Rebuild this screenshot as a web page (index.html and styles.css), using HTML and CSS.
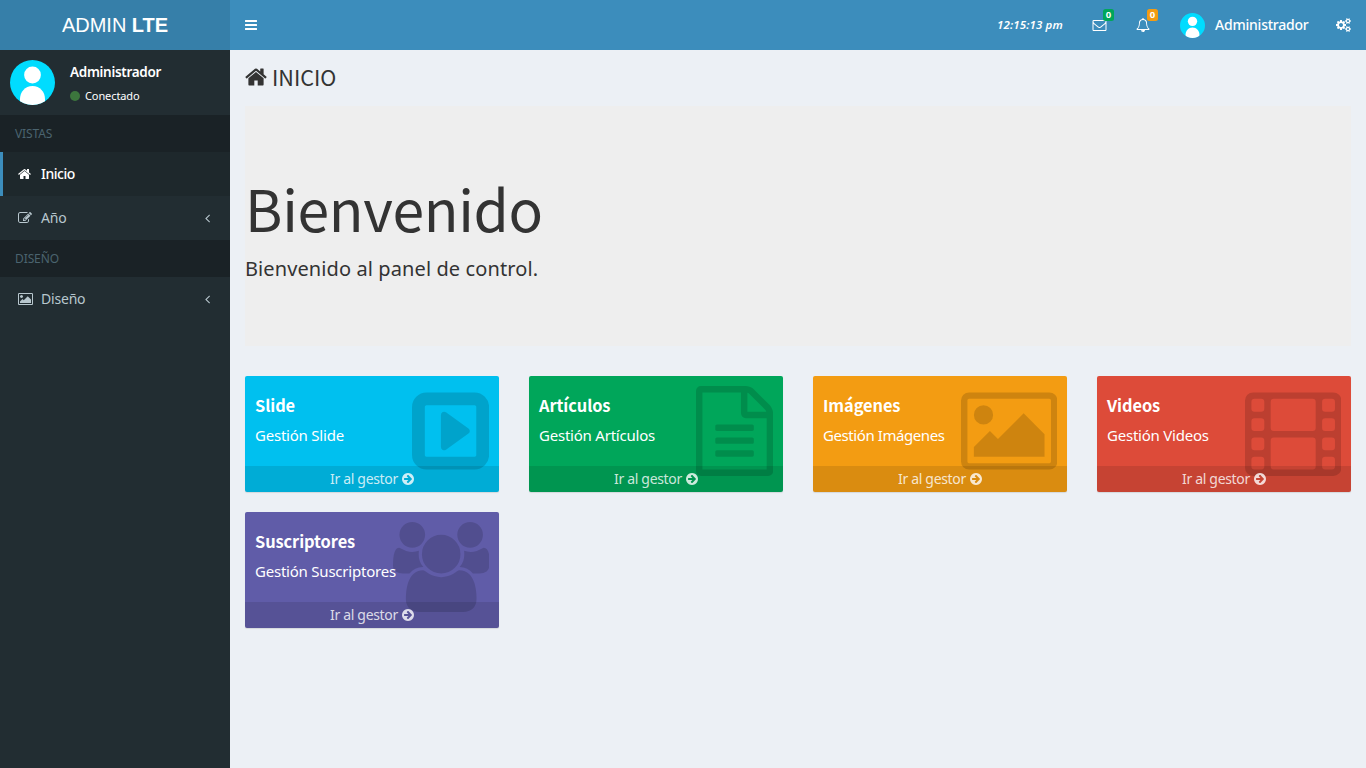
FILE: index.html
```html
<!DOCTYPE html>
<html lang="es">
<head>
<meta charset="utf-8">
<title>Admin LTE</title>
<link rel="stylesheet" href="styles.css">
</head>
<body>
<svg class="defs" aria-hidden="true">
<symbol id="home" viewBox="64 0 1664 1792"><path d="M1472 992v480q0 26-19 45t-45 19h-384v-384h-256v384h-384q-26 0-45-19t-19-45v-480q0-1 .5-3t.5-3l575-474 575 474q1 2 1 6zm223-69l-62 74q-8 9-21 11h-3q-13 0-21-7l-692-577-692 577q-12 8-24 7-13-2-21-11l-62-74q-8-10-7-23.500t11-21.500l719-599q32-26 76-26t76 26l244 204v-195q0-14 9-23t23-9h192q14 0 23 9t9 23v408l219 182q10 8 11 21.500t-7 23.500z"/></symbol>
<symbol id="edit" viewBox="0 0 1792 1792"><path d="M888 1184l116-116-152-152-116 116v56h96v96h56zm440-720q-16-16-33 1l-350 350q-17 17-1 33t33-1l350-350q17-17 1-33zm80 594v190q0 119-84.500 203.500t-203.500 84.500h-832q-119 0-203.500-84.500t-84.500-203.500v-832q0-119 84.500-203.500t203.500-84.500h832q63 0 117 25 15 7 18 23 3 17-9 29l-49 49q-14 14-32 8-23-6-45-6h-832q-66 0-113 47t-47 113v832q0 66 47 113t113 47h832q66 0 113-47t47-113v-126q0-13 9-22l64-64q15-15 35-7t20 29zm-96-738l288 288-672 672h-288v-288zm444 132l-92 92-288-288 92-92q28-28 68-28t68 28l152 152q28 28 28 68t-28 68z"/></symbol>
<symbol id="angle" viewBox="576 0 640 1792"><path d="M1203 544q0 13-10 23l-393 393 393 393q10 10 10 23t-10 23l-50 50q-10 10-23 10t-23-10l-466-466q-10-10-10-23t10-23l466-466q10-10 23-10t23 10l50 50q10 10 10 23z"/></symbol>
<symbol id="go" viewBox="128 0 1536 1792"><path d="M1413 896q0-27-18-45l-91-91-362-362q-18-18-45-18t-45 18l-91 91q-18 18-18 45t18 45l189 189h-502q-26 0-45 19t-19 45v128q0 26 19 45t45 19h502l-189 189q-19 19-19 45t19 45l91 91q18 18 45 18t45-18l362-362 91-91q18-18 18-45zm251 0q0 209-103 385.500t-279.500 279.500-385.500 103-385.500-103-279.500-279.500-103-385.500 103-385.500 279.500-279.500 385.500-103 385.500 103 279.500 279.500 103 385.500z"/></symbol>
<symbol id="bars" viewBox="128 0 1536 1792"><path d="M192 1280h1408q64 0 64 64v128q0 64-64 64h-1408q-64 0-64-64v-128q0-64 64-64zM192 768h1408q64 0 64 64v128q0 64-64 64h-1408q-64 0-64-64v-128q0-64 64-64zM192 256h1408q64 0 64 64v128q0 64-64 64h-1408q-64 0-64-64v-128q0-64 64-64z"/></symbol>
<symbol id="mail" viewBox="0 0 1792 1792"><path d="M1664 1504v-768q-32 36-69 66-268 206-426 338-51 43-83 67t-86.500 48.500-102.500 24.500h-2q-48 0-102.500-24.500t-86.500-48.500-83-67q-158-132-426-338-37-30-69-66v768q0 13 9.500 22.500t22.500 9.500h1472q13 0 22.500-9.500t9.500-22.500zm0-1051v-24.500l-.5-13-3-12.500-5.500-9-9-7.500-14-2.500h-1472q-13 0-22.500 9.500t-9.500 22.500q0 168 147 284 193 152 401 317 6 5 35 29.500t46 37.500 44.500 31.500 50.500 27.500 43 9h2q20 0 43-9t50.500-27.500 44.500-31.500 46-37.500 35-29.500q208-165 401-317 54-43 100.500-115.500t46.500-131.500zm128-37v1088q0 66-47 113t-113 47h-1472q-66 0-113-47t-47-113v-1088q0-66 47-113t113-47h1472q66 0 113 47t47 113z"/></symbol>
<symbol id="bell" viewBox="0 0 1792 1792"><path d="M912 1696q0-16-16-16-59 0-101.500-42.500t-42.500-101.500q0-16-16-16t-16 16q0 73 51.500 124.500t124.500 51.500q16 0 16-16zm-666-288h1300q-266-300-266-832 0-51-24-105t-69-103-121.500-80.500-169.500-31.500-169.500 31.500-121.500 80.500-69 103-24 105q0 532-266 832zm1482 0q0 52-38 90t-90 38h-448q0 106-75 181t-181 75-181-75-75-181h-448q-52 0-90-38t-38-90q50-42 91-88t85-119.500 74.500-158.500 50-206 19.500-260q0-152 117-282.500t307-158.500q-8-19-8-39 0-40 28-68t68-28 68 28 28 68q0 20-8 39 190 28 307 158.500t117 282.500q0 139 19.500 260t50 206 74.500 158.500 85 119.500 91 88z"/></symbol>
<symbol id="cogs" viewBox="-64 0 1920 1792"><path d="M832 896q0-106-75-181t-181-75-181 75-75 181 75 181 181 75 181-75 75-181zm768 512q0-52-38-90t-90-38-90 38-38 90q0 53 37.500 90.500t90.500 37.500 90.500-37.500 37.500-90.500zm0-1024q0-52-38-90t-90-38-90 38-38 90q0 53 37.500 90.500t90.500 37.500 90.500-37.500 37.500-90.500zm-384 421v185q0 10-7 19.500t-16 10.500l-155 24q-11 35-32 76 34 48 90 115 7 11 7 20 0 12-7 19-23 30-82.500 89.500t-78.500 59.500q-11 0-21-7l-115-90q-37 19-77 31-11 108-23 155-7 24-30 24h-186q-11 0-20-7.500t-10-17.500l-23-153q-34-10-75-31l-118 89q-7 7-20 7-11 0-21-8-144-133-144-160 0-9 7-19 10-14 41-53t47-61q-23-44-35-82l-152-24q-10-1-17-9.500t-7-19.500v-185q0-10 7-19.500t16-10.500l155-24q11-35 32-76-34-48-90-115-7-11-7-20 0-12 7-20 22-30 82-89t79-59q11 0 21 7l115 90q34-18 77-32 11-108 23-154 7-24 30-24h186q11 0 20 7.500t10 17.500l23 153q34 10 75 31l118-89q8-7 20-7 11 0 21 8 144 133 144 160 0 8-7 19-12 16-42 54t-45 60q23 48 34 82l152 23q10 2 17 10.500t7 19.500zm640 533v140q0 16-149 31-12 27-30 52 51 113 51 138 0 4-4 7-122 71-124 71-8 0-46-47t-52-68q-20 2-30 2t-30-2q-14 21-52 68t-46 47q-2 0-124-71-4-3-4-7 0-25 51-138-18-25-30-52-149-15-149-31v-140q0-16 149-31 13-29 30-52-51-113-51-138 0-4 4-7 4-2 35-20t59-34 30-16q8 0 46 46.500t52 67.500q20-2 30-2t30 2q51-71 92-112l6-2q4 0 124 70 4 3 4 7 0 25-51 138 17 23 30 52 149 15 149 31zm0-1024v140q0 16-149 31-12 27-30 52 51 113 51 138 0 4-4 7-122 71-124 71-8 0-46-47t-52-68q-20 2-30 2t-30-2q-14 21-52 68t-46 47q-2 0-124-71-4-3-4-7 0-25 51-138-18-25-30-52-149-15-149-31v-140q0-16 149-31 13-29 30-52-51-113-51-138 0-4 4-7 4-2 35-20t59-34 30-16q8 0 46 46.500t52 67.500q20-2 30-2t30 2q51-71 92-112l6-2q4 0 124 70 4 3 4 7 0 25-51 138 17 23 30 52 149 15 149 31z"/></symbol>
<symbol id="play" viewBox="128 0 1536 1792"><path d="M1280 896q0 33-27 52l-448 320q-17 12-37 12-15 0-29-7-35-17-35-57v-640q0-40 35-57 36-18 66 5l448 320q27 19 27 52zm128 480v-960q0-14-9-23t-23-9h-960q-14 0-23 9t-9 23v960q0 14 9 23t23 9h960q14 0 23-9t9-23zm256-960v960q0 119-84.500 203.500t-203.500 84.500h-960q-119 0-203.500-84.500t-84.500-203.500v-960q0-119 84.500-203.500t203.500-84.500h960q119 0 203.500 84.500t84.500 203.500z"/></symbol>
<symbol id="file" viewBox="128 0 1536 1792"><path d="M1596 380q28 28 48 76t20 88v1152q0 40-28 68t-68 28h-1344q-40 0-68-28t-28-68v-1600q0-40 28-68t68-28h896q40 0 88 20t76 48zm-444-244v376h376q-10-29-22-41l-313-313q-12-12-41-22zm384 1528v-1024h-416q-40 0-68-28t-28-68v-416h-768v1536h1280zm-1024-864q0-14 9-23t23-9h704q14 0 23 9t9 23v64q0 14-9 23t-23 9h-704q-14 0-23-9t-9-23v-64zm736 224q14 0 23 9t9 23v64q0 14-9 23t-23 9h-704q-14 0-23-9t-9-23v-64q0-14 9-23t23-9h704zm0 256q14 0 23 9t9 23v64q0 14-9 23t-23 9h-704q-14 0-23-9t-9-23v-64q0-14 9-23t23-9h704z"/></symbol>
<symbol id="image" viewBox="-64 0 1920 1792"><path d="M576 576q0 80-56 136t-136 56-136-56-56-136 56-136 136-56 136 56 56 136zm1024 384v448h-1408v-192l320-320 160 160 512-512zm96-704h-1600q-13 0-22.500 9.500t-9.500 22.500v1216q0 13 9.500 22.500t22.500 9.500h1600q13 0 22.500-9.500t9.500-22.500v-1216q0-13-9.500-22.500t-22.500-9.500zm160 32v1216q0 66-47 113t-113 47h-1600q-66 0-113-47t-47-113v-1216q0-66 47-113t113-47h1600q66 0 113 47t47 113z"/></symbol>
<symbol id="film" viewBox="0 0 1920 1792"><path fill-rule="evenodd" d="M160 128h1600q66 0 113 47t47 113v1344q0 66-47 113t-113 47h-1600q-66 0-113-47t-47-113v-1344q0-66 47-113t113-47z
M192 256h128q64 0 64 64v128q0 64-64 64h-128q-64 0-64-64v-128q0-64 64-64z
M192 640h128q64 0 64 64v128q0 64-64 64h-128q-64 0-64-64v-128q0-64 64-64z
M192 1024h128q64 0 64 64v128q0 64-64 64h-128q-64 0-64-64v-128q0-64 64-64z
M192 1408h128q64 0 64 64v128q0 64-64 64h-128q-64 0-64-64v-128q0-64 64-64z
M1600 256h128q64 0 64 64v128q0 64-64 64h-128q-64 0-64-64v-128q0-64 64-64z
M1600 640h128q64 0 64 64v128q0 64-64 64h-128q-64 0-64-64v-128q0-64 64-64z
M1600 1024h128q64 0 64 64v128q0 64-64 64h-128q-64 0-64-64v-128q0-64 64-64z
M1600 1408h128q64 0 64 64v128q0 64-64 64h-128q-64 0-64-64v-128q0-64 64-64z
M576 256h768q64 0 64 64v512q0 64-64 64h-768q-64 0-64-64v-512q0-64 64-64z
M576 1024h768q64 0 64 64v512q0 64-64 64h-768q-64 0-64-64v-512q0-64 64-64z"/></symbol>
<symbol id="users" viewBox="0 0 1920 1792"><path d="M593 896q-162 5-265 128h-134q-82 0-138-40.500t-56-118.500q0-353 124-353 6 0 43.500 21t97.500 42.500 119 21.500q67 0 133-23-5 37-5 66 0 159 93 256zm1071 637q0 120-73 189.500t-194 69.500h-874q-121 0-194-69.500t-73-189.500q0-53 3.500-103.500t14-109 26.500-108.500 43-97.500 62-81 85.500-53.500 111.500-20q10 0 43 21.500t73 48 107 48 135 21.500 135-21.500 107-48 73-48 43-21.500q61 0 111.500 20t85.500 53.500 62 81 43 97.500 26.500 108.500 14 109 3.500 103.500zm-1024-1277q0 106-75 181t-181 75-181-75-75-181 75-181 181-75 181 75 75 181zm704 384q0 159-112.500 271.500t-271.500 112.500-271.500-112.500-112.500-271.500 112.500-271.500 271.500-112.500 271.500 112.500 112.500 271.500zm576 225q0 78-56 118.500t-138 40.500h-134q-103-123-265-128 93-97 93-256 0-29-5-66 66 23 133 23 59 0 119-21.500t97.500-42.500 43.500-21q124 0 124 353zm-128-609q0 106-75 181t-181 75-181-75-75-181 75-181 181-75 181 75 75 181z"/></symbol>
<symbol id="avatar" viewBox="0 0 45 45"><clipPath id="round"><circle cx="22.500" cy="22.500" r="22.500"/></clipPath><g clip-path="url(#round)"><path fill="#00dcff" d="M0 0h45v45H0z"/><circle cx="22.500" cy="15" r="8.400" fill="#fff"/><path fill="#fff" d="M10 46v-7c0-7 5-13 12.500-13S35 32 35 39v7z"/></g></symbol>
</svg>

<header class="topbar">
  <a class="logo">ADMIN&nbsp;<b>LTE</b></a>
  <nav class="navbar">
    <a class="toggle"><svg class="ico w12"><use href="#bars"/></svg></a>
    <span class="clock">12:15:13 pm</span>
    <a class="notice mail"><svg class="ico w15"><use href="#mail"/></svg><span class="badge green">0</span></a>
    <a class="notice bell"><svg class="ico w14"><use href="#bell"/></svg><span class="badge orange">0</span></a>
    <a class="account"><svg class="avatar-sm"><use href="#avatar"/></svg><span>Administrador</span></a>
    <a class="settings"><svg class="ico w15"><use href="#cogs"/></svg></a>
  </nav>
</header>

<div class="body">
  <aside class="sidebar">
    <div class="user">
      <svg class="avatar"><use href="#avatar"/></svg>
      <div class="who"><p class="name">Administrador</p><p class="status"><i class="dot"></i><span>Conectado</span></p></div>
    </div>
    <div class="section">VISTAS</div>
    <a class="item active"><svg class="ico w13"><use href="#home"/></svg><span>Inicio</span></a>
    <a class="item"><svg class="ico w14"><use href="#edit"/></svg><span>Año</span><svg class="ico w5 arrow"><use href="#angle"/></svg></a>
    <div class="section">DISEÑO</div>
    <a class="item"><svg class="ico w15"><use href="#image"/></svg><span>Diseño</span><svg class="ico w5 arrow"><use href="#angle"/></svg></a>
  </aside>

  <main class="content">
    <h1 class="title"><svg class="title-ico"><use href="#home"/></svg><span>INICIO</span></h1>
    <section class="jumbotron">
      <h2 class="welcome">Bienvenido</h2>
      <p class="lead">Bienvenido al panel de control.</p>
    </section>
    <div class="cards">
      <article class="card aqua"><svg class="art narrow"><use href="#play"/></svg><h3>Slide</h3><p>Gestión Slide</p><a class="go"><span>Ir al gestor</span><svg class="ico w12"><use href="#go"/></svg></a></article>
      <article class="card leaf"><svg class="art narrow"><use href="#file"/></svg><h3>Artículos</h3><p>Gestión Artículos</p><a class="go"><span>Ir al gestor</span><svg class="ico w12"><use href="#go"/></svg></a></article>
      <article class="card amber"><svg class="art"><use href="#image"/></svg><h3>Imágenes</h3><p>Gestión Imágenes</p><a class="go"><span>Ir al gestor</span><svg class="ico w12"><use href="#go"/></svg></a></article>
      <article class="card red"><svg class="art"><use href="#film"/></svg><h3>Videos</h3><p>Gestión Videos</p><a class="go"><span>Ir al gestor</span><svg class="ico w12"><use href="#go"/></svg></a></article>
      <article class="card purple"><svg class="art"><use href="#users"/></svg><h3>Suscriptores</h3><p>Gestión Suscriptores</p><a class="go"><span>Ir al gestor</span><svg class="ico w12"><use href="#go"/></svg></a></article>
    </div>
  </main>
</div>
</body>
</html>
```

FILE: styles.css
```css
* { box-sizing: border-box; }
body { margin: 0; height: 768px; display: flex; flex-direction: column; overflow: hidden; background: #ecf0f5; color: #333; font: 14px/20px "Noto Sans", sans-serif; }
h1, h2, h3, p { margin: 0; font-weight: 400; }
.defs { position: absolute; width: 0; height: 0; }
.ico { height: 14px; fill: currentColor; flex: none; overflow: visible; }
.w5 { width: 5px; }
.w12 { width: 12px; }
.w13 { width: 13px; }
.w14 { width: 14px; }
.w15 { width: 15px; }

.topbar { display: flex; height: 50px; flex: none; color: #fff; }
.logo { width: 230px; background: #367fa9; font: 20px/50px "Liberation Sans", Arial, sans-serif; text-align: center; letter-spacing: -.050px; }
.navbar { flex: 1; display: flex; align-items: center; background: #3c8dbc; }
.toggle { display: flex; padding-left: 15px; margin-right: auto; }
.clock { font-size: 11.500px; font-weight: 600; font-style: italic; letter-spacing: .13px; width: 67px; white-space: nowrap; }
.notice { position: relative; display: flex; }
.mail { margin-left: 28px; }
.bell { margin-left: 29px; }
.badge { position: absolute; left: 11px; top: -9px; height: 12px; width: 11px; border-radius: 2.500px; font: bold 9.500px/12px "Noto Sans", sans-serif; text-align: center; }
.green { background: #00a65a; }
.orange { background: #f39c12; }
.account { display: flex; align-items: center; gap: 10px; margin-left: 30px; width: 127px; white-space: nowrap; letter-spacing: -.220px; font-weight: 500; }
.avatar-sm { width: 25px; height: 25px; flex: none; }
.settings { display: flex; margin: 0 15px 0 29px; }

.body { display: flex; flex: 1; }
.sidebar { width: 230px; background: #222d32; }
.user { display: flex; height: 65px; padding: 10px; gap: 15px; color: #fff; }
.avatar { width: 45px; height: 45px; }
.name { font-size: 13.500px; font-weight: 600; line-height: 20px; padding-top: 2px; letter-spacing: -.300px; }
.status { display: flex; align-items: center; gap: 5px; font-size: 11px; line-height: 16px; margin-top: 6px; letter-spacing: -.100px; }
.dot { width: 10px; height: 10px; border-radius: 50%; background: #3c763d; }
.section { height: 37px; padding-left: 15px; background: #1a2226; color: #4b646f; font-size: 12px; line-height: 37px; letter-spacing: -.100px; }
.item { display: flex; align-items: center; height: 44px; padding: 0 20px 0 18px; color: #b8c7ce; letter-spacing: -.200px; }
.item.active { background: #1e282c; color: #fff; border-left: 3px solid #3c8dbc; padding-left: 15px; font-weight: 500; letter-spacing: -.500px; }
.item span { margin-left: 9px; }
.item .w13 + span { margin-left: 10px; }
.item .w15 + span { margin-left: 8px; }
.arrow { margin-left: auto; }

.content { flex: 1; padding: 14px 15px 0; }
.title { display: flex; align-items: center; height: 26px; gap: 5px; font: 21.600px/26px "Noto Sans CJK SC", sans-serif; }
.title-ico { width: 22px; height: 24px; fill: currentColor; }
.jumbotron { height: 240px; margin-top: 16px; padding-top: 66px; background: #eee; }
.welcome { font: 57px/70px "Noto Sans CJK SC", sans-serif; letter-spacing: -.300px; }
.lead { font-size: 20px; line-height: 30px; margin-top: 12px; letter-spacing: .100px; }
.cards { display: grid; grid-template-columns: repeat(4, 254px); column-gap: 30px; row-gap: 20px; margin-top: 30px; }
.card { position: relative; height: 116px; padding: 17px 10px 0; border-radius: 2px; color: #fff; box-shadow: 0 1px 1px rgba(0,0,0,.1); }
.card h3 { position: relative; font: bold 16.400px/24px "Noto Sans CJK SC", sans-serif; letter-spacing: -.080px; }
.card p { position: relative; font-size: 15px; line-height: 22px; margin-top: 7px; white-space: nowrap; letter-spacing: -.220px; }
.amber p { letter-spacing: -.420px; }
.art { position: absolute; top: 10px; right: 10px; width: 96.400px; height: 90px; fill: rgba(0,0,0,.15); }
.narrow { width: 77.100px; }
.go { position: relative; display: flex; align-items: center; justify-content: center; gap: 4px; height: 26px; margin: 20px -10px 0; background: rgba(0,0,0,.1); color: rgba(255,255,255,.8); border-radius: 0 0 2px 2px; letter-spacing: -.330px; }
.aqua { background: #00c0ef; }
.leaf { background: #00a65a; }
.amber { background: #f39c12; }
.red { background: #dd4b39; }
.purple { background: #605ca8; }
```
